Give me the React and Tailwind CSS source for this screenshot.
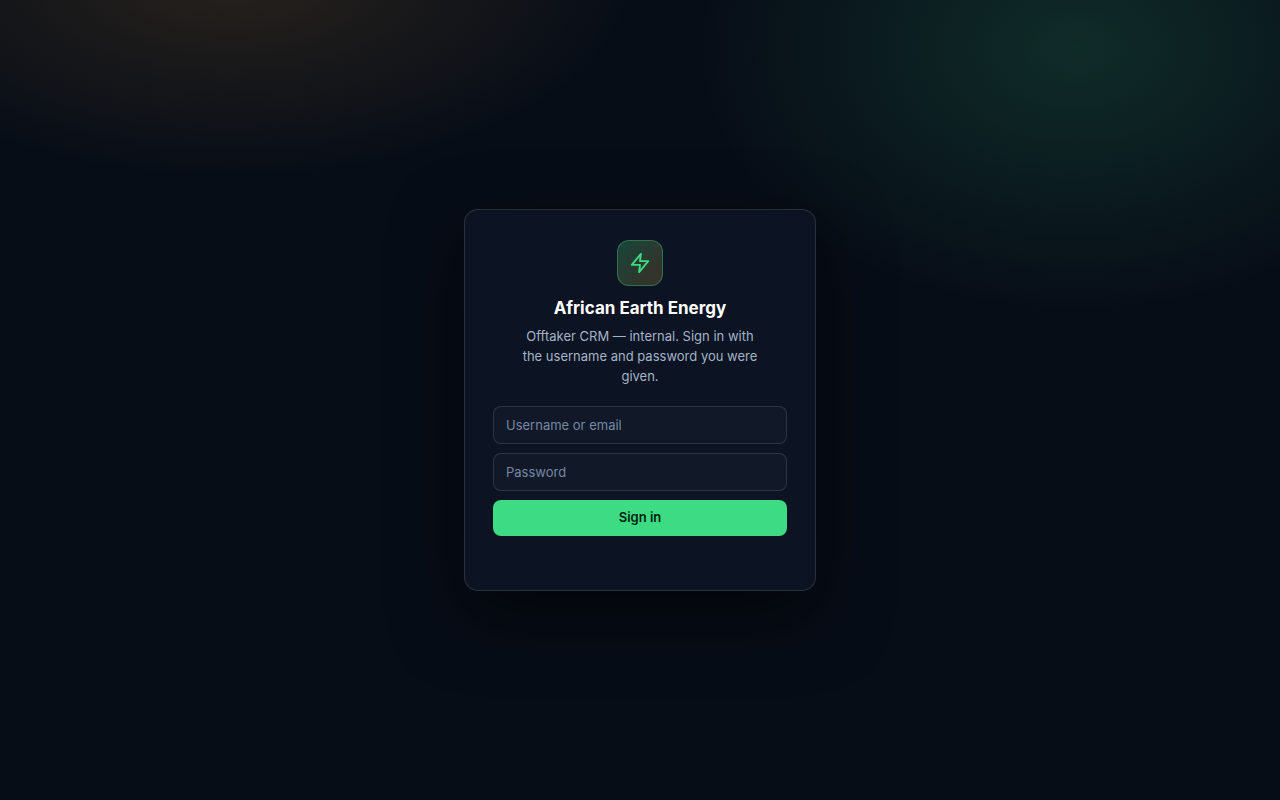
import { FiZap } from "react-icons/fi";

const fieldClass =
  "block w-full h-[38px] rounded-lg border border-white/12 bg-[#111827] px-3 text-[13px] text-slate-100 placeholder:text-[#7488a3] outline-none focus:border-[#3ddc84]";

export default function App() {
  return (
    <main className="flex min-h-screen items-center justify-center bg-[#070d17] bg-[radial-gradient(630px_440px_at_84%_6%,rgba(61,220,140,0.15),transparent_60%),radial-gradient(680px_350px_at_18%_-4%,rgba(245,165,60,0.14),transparent_60%)] px-4 font-['Inter',sans-serif]">
      <section className="w-full max-w-[352px] rounded-[14px] border border-white/12 bg-[#0c1322] px-7 pt-[30px] pb-[54px] text-center shadow-[0_24px_70px_rgba(0,0,0,0.6)]">
        <div className="mx-auto flex size-[46px] items-center justify-center rounded-xl border border-[#3ddc84]/35 bg-[linear-gradient(135deg,rgba(61,220,132,0.25),rgba(245,165,60,0.2))] text-[#3ddc84]">
          <FiZap size={22} aria-hidden="true" />
        </div>
        <h1 className="mt-3 text-[17px] leading-5 font-bold text-white">
          African Earth Energy
        </h1>
        <p className="mx-auto mt-2 max-w-[240px] text-[13px] leading-5 text-[#a3b3c7]">
          Offtaker CRM — internal. Sign in with the username and password you
          were given.
        </p>
        <form
          className="mt-5 flex flex-col gap-[9px]"
          onSubmit={(event) => event.preventDefault()}
        >
          <input
            className={fieldClass}
            type="text"
            name="username"
            autoComplete="username"
            aria-label="Username or email"
            placeholder="Username or email"
          />
          <input
            className={fieldClass}
            type="password"
            name="password"
            autoComplete="current-password"
            aria-label="Password"
            placeholder="Password"
          />
          <button
            className="h-9 w-full cursor-pointer rounded-lg bg-[#3ddc84] text-[13px] font-semibold text-[#04210f]"
            type="submit"
          >
            Sign in
          </button>
        </form>
      </section>
    </main>
  );
}
